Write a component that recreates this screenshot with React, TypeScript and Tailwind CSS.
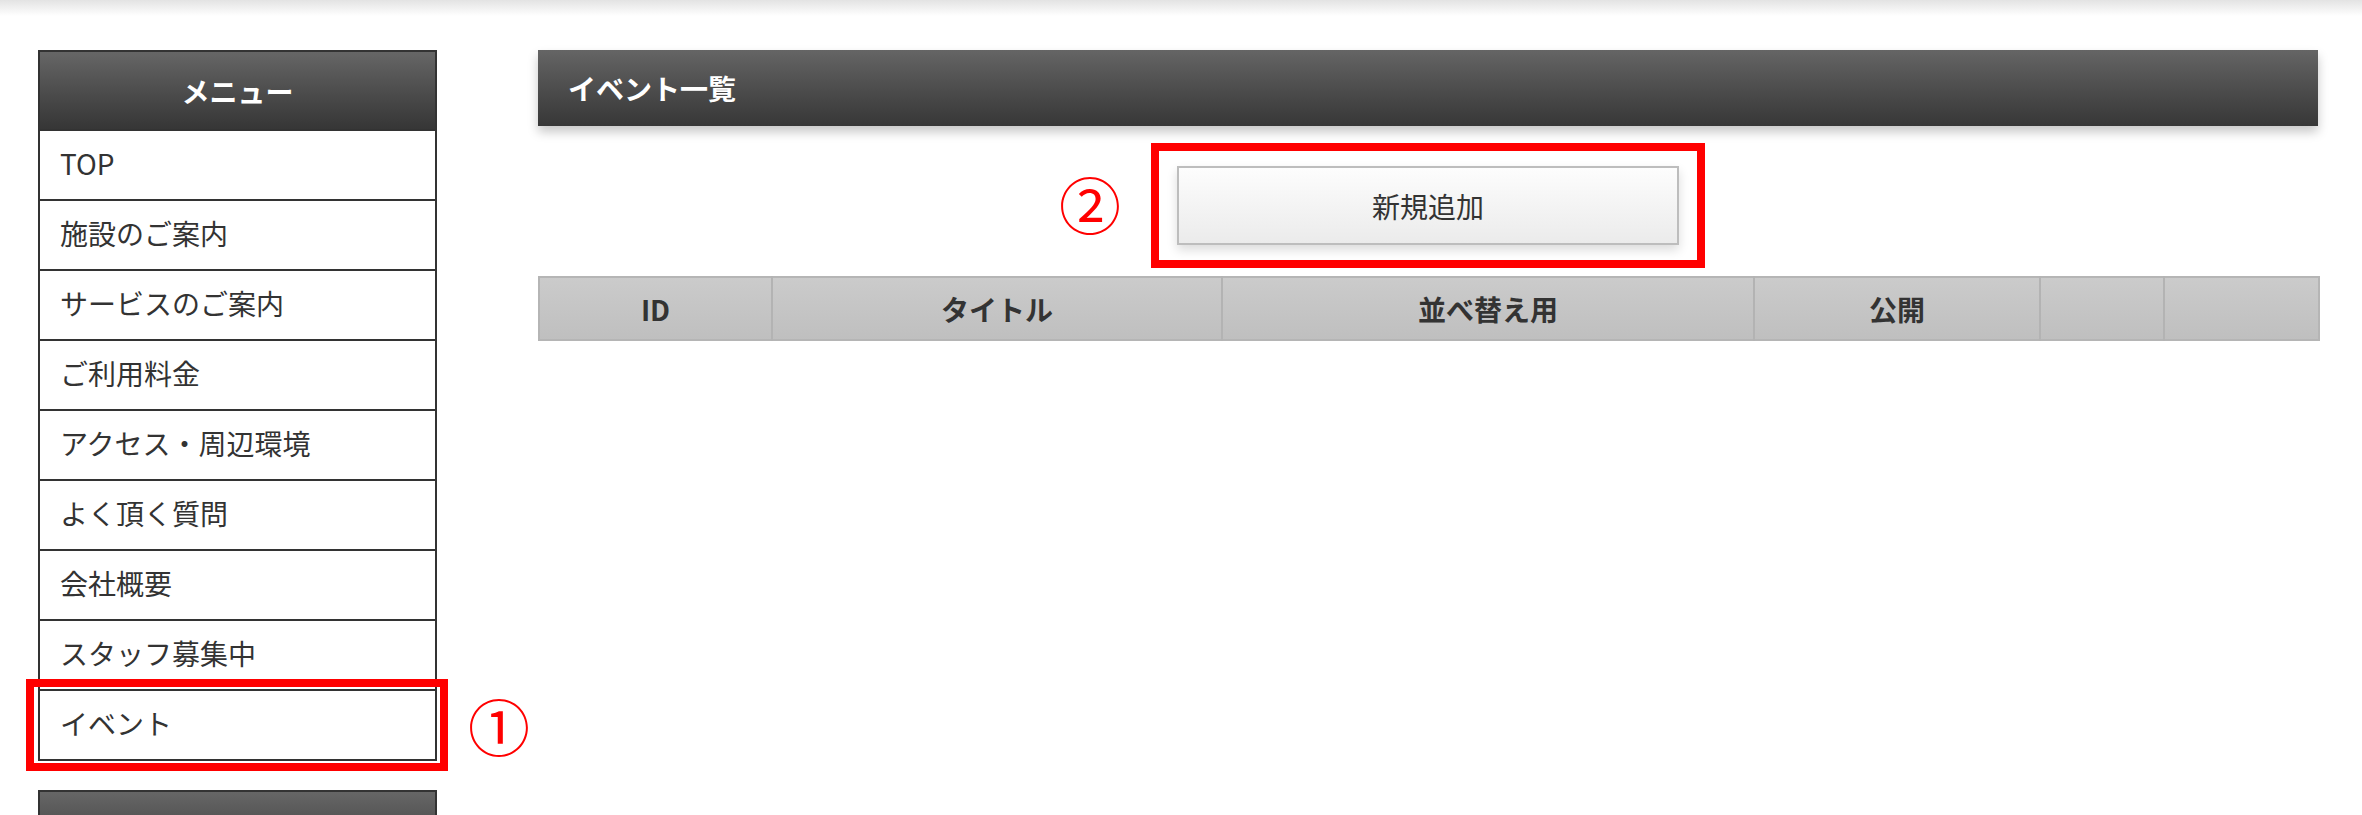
const menuItems = [
  'TOP',
  '施設のご案内',
  'サービスのご案内',
  'ご利用料金',
  'アクセス・周辺環境',
  'よく頂く質問',
  '会社概要',
  'スタッフ募集中',
  'イベント',
];

const columns = [
  { label: 'ID', width: 'w-[233px]' },
  { label: 'タイトル', width: 'w-[450px]' },
  { label: '並べ替え用', width: 'w-[532px]' },
  { label: '公開', width: 'w-[286px]' },
  { label: '', width: 'w-[124px]' },
  { label: '', width: 'w-[155px]' },
];

const Sidebar = () => {
  return (
    <aside className="w-[399px] shrink-0">
      <div className="border-2 border-[#333]">
        <div className="h-[77px] flex items-center justify-center bg-gradient-to-b from-[#666] to-[#363636]">
          <span className="text-white font-bold text-[28px]">メニュー</span>
        </div>
        <ul>
          {menuItems.map((item, i) => (
            <li
              key={item}
              className="relative h-[70px] border-t-2 border-[#333] bg-white flex items-center pl-[20px] pb-[4px] text-[28px] text-[#333]"
            >
              {item}
              {i === menuItems.length - 1 && (
                <>
                  <span className="absolute -left-[14px] -right-[13px] -top-[12px] -bottom-[12px] border-[8px] border-[#ff0000] pointer-events-none"></span>
                  <span className="absolute left-[calc(100%+33px)] top-1/2 -translate-y-1/2 text-[#ff0000] text-[62px] leading-none">①</span>
                </>
              )}
            </li>
          ))}
        </ul>
      </div>

      {/* second menu block, mostly below the fold */}
      <div className="mt-[29px] border-2 border-[#333]">
        <div className="h-[77px] flex items-center justify-center bg-gradient-to-b from-[#666] to-[#363636]">
          <span className="text-white font-bold text-[28px]">アカウント</span>
        </div>
      </div>
    </aside>
  );
};

const EventList = () => {
  return (
    <main className="flex-1 min-w-0">
      <div className="h-[76px] flex items-center pl-[30px] bg-gradient-to-b from-[#656565] to-[#373737] shadow-[0_6px_10px_rgba(0,0,0,0.22)]">
        <h1 className="text-white font-bold text-[28px]">イベント一覧</h1>
      </div>

      <div className="mt-[40px] flex justify-center">
        <div className="relative">
          <button className="w-[502px] h-[79px] border-2 border-[#bdbdbd] bg-gradient-to-b from-[#fdfdfd] to-[#ebebeb] shadow-[0_5px_10px_rgba(0,0,0,0.14)] text-[28px] text-[#333]">
            新規追加
          </button>
          <span className="absolute -left-[26px] -right-[26px] -top-[23px] -bottom-[23px] border-[8px] border-[#ff0000] pointer-events-none"></span>
          <span className="absolute -left-[118px] top-1/2 -translate-y-[55%] text-[#ff0000] text-[62px] leading-none">②</span>
        </div>
      </div>

      <table className="mt-[31px] w-full table-fixed border-collapse border-2 border-[#b5b5b5]">
        <thead>
          <tr className="h-[63px] bg-gradient-to-b from-[#cbcbcb] to-[#bfbfbf]">
            {columns.map((col, i) => (
              <th
                key={i}
                className={`${col.width} border-l-2 border-[#b3b3b3] first:border-l-0 text-[28px] font-bold text-[#333]`}
              >
                {col.label}
              </th>
            ))}
          </tr>
        </thead>
      </table>
    </main>
  );
}

export default function App() {
  return (
    <div className="min-h-screen bg-white font-['Noto_Sans_CJK_JP','Noto_Sans',sans-serif]">
      <div className="h-[16px] bg-gradient-to-b from-[#e3e3e3] to-white"></div>
      <div className="flex gap-[101px] pl-[38px] pr-[44px] pt-[34px]">
        <Sidebar />
        <EventList />
      </div>
    </div>
  );
}
